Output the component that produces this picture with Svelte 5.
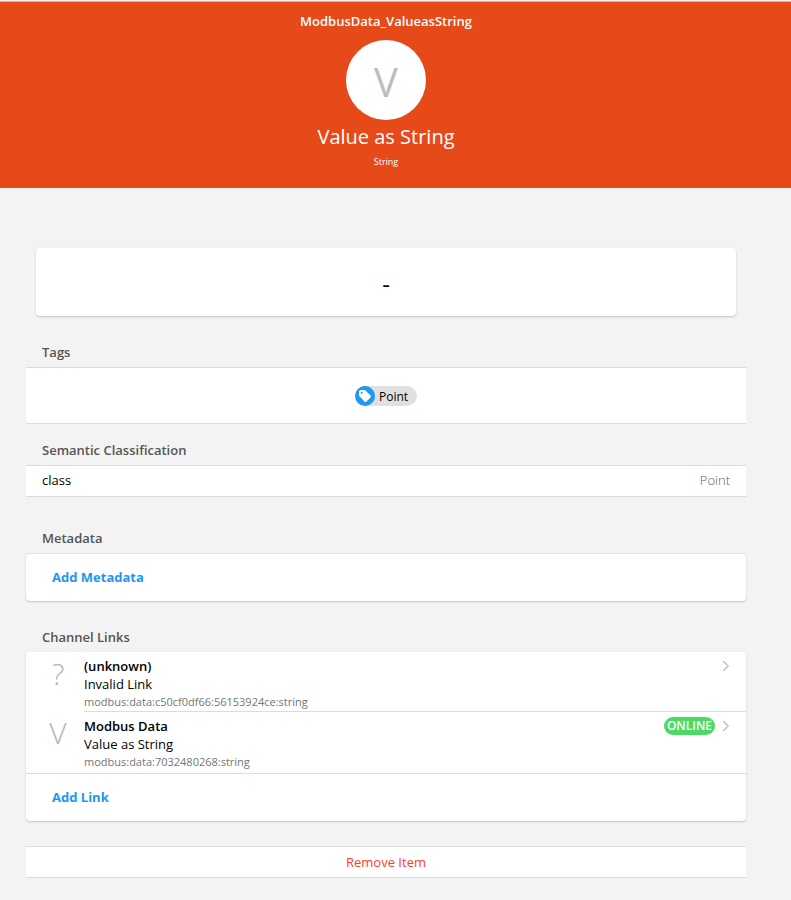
<script>
  const links = [
    { initial: '?', title: '(unknown)', label: 'Invalid Link', uid: 'modbus:data:c50cf0df66:56153924ce:string', status: '' },
    { initial: 'V', title: 'Modbus Data', label: 'Value as String', uid: 'modbus:data:7032480268:string', status: 'ONLINE' }
  ];
</script>

<div class="page">
  <header>
    <h1>ModbusData_ValueasString</h1>
    <div class="avatar">V</div>
    <h2>Value as String</h2>
    <p>String</p>
  </header>

  <main>
    <div class="card state">-</div>

    <section class="tags">
      <h3>Tags</h3>
      <div class="block chips">
        <span class="chip">
          <span class="chip-media">
            <svg viewBox="0 0 14 14" width="14" height="14" aria-hidden="true">
              <path fill="#fff" fill-rule="evenodd" d="M1 2.6Q1 1 2.6 1h3.6q.8 0 1.4.6l4.9 4.8q1 1 0 2l-4 4q-1 1-2 0L1.6 7.6Q1 7 1 6.2zM3.7 2.7a1 1 0 1 0 0 2 1 1 0 0 0 0-2z" />
            </svg>
          </span>
          <span class="chip-label">Point</span>
        </span>
      </div>
    </section>

    <section class="semantics">
      <h3>Semantic Classification</h3>
      <div class="block row"><span>class</span><span class="after">Point</span></div>
    </section>

    <section class="metadata">
      <h3>Metadata</h3>
      <div class="card topline"><button class="add">Add Metadata</button></div>
    </section>

    <section class="channels">
      <h3>Channel Links</h3>
      <div class="card">
        <ul>
          {#each links as link}
            <li>
              <a href="#link">
                <span class="initial">{link.initial}</span>
                <span class="inner">
                  <span class="texts">
                    <span class="title">{link.title}</span>
                    <span class="label">{link.label}</span>
                    <span class="uid">{link.uid}</span>
                  </span>
                  {#if link.status}<span class="badge">{link.status}</span>{/if}
                  <svg class="chevron" viewBox="0 0 8 12" width="8" height="12" aria-hidden="true">
                    <path d="M1.2 1.2 6 6 1.2 10.8" fill="none" stroke="#c7c7cc" stroke-width="1.7" />
                  </svg>
                </span>
              </a>
            </li>
          {/each}
        </ul>
        <button class="add">Add Link</button>
      </div>
    </section>

    <button class="block remove">Remove Item</button>
  </main>
</div>

<style>
  :global(body) {
    background: #f3f3f3;
  }
  .page {
    box-sizing: border-box;
    min-height: 100vh;
    font-family: 'Open Sans', 'Noto Sans', sans-serif;
    font-size: 13px;
    line-height: 18px;
    color: #000;
  }
  header {
    display: flex;
    flex-direction: column;
    align-items: center;
    padding: 10px 19px 18px 0;
    border-top: 1px solid #eeeeee;
    background: #e64a19;
    box-shadow: inset 0 1px 0 #d3b8ae;
    color: #fff;
  }
  h1, h2, h3, header p, ul {
    margin: 0;
    padding: 0;
  }
  h1 {
    font-size: 13px;
    line-height: 20px;
    font-weight: 600;
  }
  .avatar {
    width: 80px;
    height: 80px;
    margin-top: 9px;
    border-radius: 50%;
    background: #fff;
    color: #bdbdbd;
    font-size: 40px;
    line-height: 84px;
    text-align: center;
  }
  h2 {
    font-size: 20px;
    line-height: 34px;
    font-weight: 400;
  }
  header p {
    font-size: 9px;
    line-height: 16px;
    font-weight: 500;
  }
  main {
    max-width: 720px;
    margin: 0 auto;
    padding: 60px 45px 22px 26px;
  }
  .card {
    border-radius: 4px;
    background: #fff;
    box-shadow: 0 1px 2px rgba(0, 0, 0, 0.2);
  }
  .state {
    margin: 0 10px;
    padding-top: 4px;
    font-size: 24px;
    line-height: 64px;
    text-align: center;
  }
  .block {
    border: solid #dcdcdc;
    border-width: 1px 0;
    background: #fff;
  }
  h3 {
    padding: 0 16px 6px;
    font-size: 13px;
    line-height: 18px;
    font-weight: 600;
    color: #555;
  }
  .tags {
    margin-top: 27px;
  }
  .semantics {
    margin-top: 17px;
  }
  .metadata {
    margin-top: 32px;
  }
  .channels {
    margin-top: 27px;
  }
  .topline {
    border-top: 1px solid #e2e2e2;
  }
  .chips {
    display: flex;
    justify-content: center;
    padding: 18px 0 17px;
  }
  .chip {
    display: flex;
    height: 20px;
    border-radius: 10px;
    background: #e0e0e0;
    font-size: 12px;
    line-height: 21px;
  }
  .chip-media {
    display: flex;
    align-items: center;
    justify-content: center;
    width: 20px;
    border-radius: 50%;
    background: #2196f3;
  }
  .chip-label {
    padding: 0 9px 0 4px;
  }
  .row {
    display: flex;
    justify-content: space-between;
    padding: 5px 16px 7px;
  }
  .after {
    color: #606065;
    font-weight: 300;
  }
  button {
    display: block;
    width: 100%;
    margin: 0;
    font: inherit;
    cursor: pointer;
  }
  .add {
    padding: 0 26px;
    border: 0;
    background: none;
    color: #2196f3;
    font-weight: 700;
    line-height: 47px;
    text-align: left;
  }
  ul {
    list-style: none;
    border-bottom: 1px solid #dcdcdc;
  }
  li a {
    display: flex;
    color: inherit;
    text-decoration: none;
  }
  .initial {
    width: 32px;
    margin: 0 10px 0 16px;
    color: #b4b4b4;
    font-size: 30px;
    font-weight: 300;
    line-height: 44px;
    text-align: center;
  }
  .inner {
    display: flex;
    flex: 1;
    align-items: flex-start;
    padding: 5px 16px 1px 0;
  }
  li + li .inner {
    padding-bottom: 3px;
    border-top: 1px solid #dcdcdc;
  }
  .texts {
    display: flex;
    flex: 1;
    flex-direction: column;
  }
  .title {
    font-weight: 600;
  }
  .uid {
    color: #757575;
    font-size: 11px;
    line-height: 17px;
  }
  .badge {
    padding: 0 3px;
    border-radius: 9px;
    background: #4cd964;
    color: #fff;
    font-size: 12px;
    line-height: 18px;
    font-weight: 600;
  }
  .chevron {
    margin: 3px 0 0 7px;
  }
  .remove {
    margin-top: 25px;
    padding: 6px 0;
    color: #ff3b30;
    text-align: center;
  }
</style>
